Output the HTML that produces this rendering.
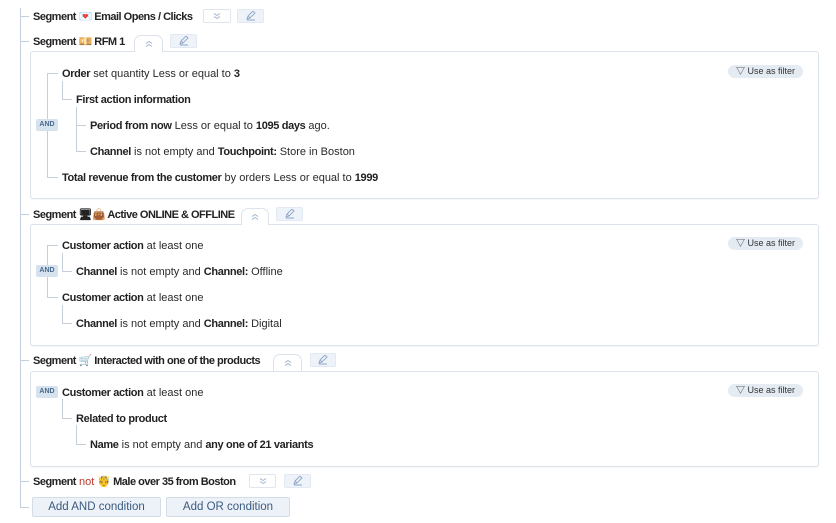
<!DOCTYPE html>
<html><head><meta charset="utf-8"><style>
*{margin:0;padding:0;box-sizing:border-box}
body{width:836px;height:523px;background:#fff;position:relative;overflow:hidden;font-family:"Liberation Sans","Noto Sans CJK JP",sans-serif;font-size:11px;color:#2a2a2a}
.t{position:absolute;line-height:14px;white-space:nowrap;margin-top:-6px}
b{font-weight:bold;color:#222;letter-spacing:-0.35px}
.h b{letter-spacing:-0.5px}
.l{position:absolute;background:#c3d0dc}
.box{position:absolute;left:30px;width:789px;border:1px solid #dde3ea;border-radius:3px;background:#fff;box-shadow:0 1px 1px rgba(0,0,0,.04)}
.btn{position:absolute;height:14px;border:1px solid #dfe6ee;border-radius:2px;background:#fff}
.pen{background:#eef3fa;border-color:#e2e9f2}
.tab{position:absolute;height:17px;border:1px solid #dde3ea;border-bottom:none;border-radius:7px 7px 0 0;background:#fff;z-index:2}
svg{position:absolute;left:50%;top:50%;transform:translate(-50%,-50%)}
.and{position:absolute;left:36px;width:22px;height:12px;margin-top:-6px;background:#d6e2ee;border-radius:2px;color:#4a6a8c;font-size:7px;font-weight:bold;text-align:center;line-height:12px;z-index:2}
.uf{position:absolute;left:728px;width:75px;height:13px;margin-top:-6px;background:#e4ebf3;border-radius:7px;font-size:9px;color:#333;line-height:13px;text-align:center}
.add{position:absolute;top:497px;height:20px;background:#edf2f8;border:1px solid #d3dde8;border-radius:2px;color:#3a5a80;font-size:11.5px;text-align:center;line-height:18px}
</style></head><body>
<svg width="0" height="0" style="position:absolute">
<defs>
<g id="dn"><path d="M1 1l3 2 3-2M1 4l3 2 3-2" fill="none" stroke="#9bb0c8" stroke-width="0.9"/></g>
<g id="up"><path d="M1 3l3-2 3 2M1 6l3-2 3 2" fill="none" stroke="#9bb0c8" stroke-width="0.9"/></g>
<g id="pn"><path d="M1 8l1-3 5-5 2 2-5 5z M2 5l2 2 M1 9h8" fill="none" stroke="#8ea6c4" stroke-width="0.9"/></g>
</defs></svg>

<div class="l" style="left:20px;top:8px;width:1px;height:500px"></div>
<div class="l" style="left:20px;top:16px;width:9px;height:1px"></div>
<div class="l" style="left:20px;top:41px;width:9px;height:1px"></div>
<div class="l" style="left:20px;top:214px;width:9px;height:1px"></div>
<div class="l" style="left:20px;top:360px;width:9px;height:1px"></div>
<div class="l" style="left:20px;top:481px;width:9px;height:1px"></div>
<div class="l" style="left:20px;top:507px;width:9px;height:1px"></div>

<div class="t h" style="left:33px;top:16px"><b>Segment 💌 Email Opens / Clicks</b></div>
<div class="btn" style="left:203px;top:9px;width:28px"><svg width="8" height="7"><use href="#dn"/></svg></div>
<div class="btn pen" style="left:237px;top:9px;width:27px"><svg width="10" height="10"><use href="#pn"/></svg></div>

<div class="t h" style="left:33px;top:41px"><b>Segment 💴 RFM 1</b></div>
<div class="tab" style="left:134px;top:35px;width:29px"><svg width="8" height="7"><use href="#up"/></svg></div>
<div class="btn pen" style="left:170px;top:34px;width:27px"><svg width="10" height="10"><use href="#pn"/></svg></div>
<div class="box" style="top:51px;height:148px"></div>

<div class="l" style="left:47px;top:73px;width:1px;height:105px"></div>
<div class="l" style="left:47px;top:73px;width:11px;height:1px"></div>
<div class="l" style="left:47px;top:177px;width:11px;height:1px"></div>
<div class="l" style="left:62px;top:81px;width:1px;height:18px"></div>
<div class="l" style="left:62px;top:99px;width:10px;height:1px"></div>
<div class="l" style="left:76px;top:107px;width:1px;height:45px"></div>
<div class="l" style="left:76px;top:125px;width:10px;height:1px"></div>
<div class="l" style="left:76px;top:151px;width:10px;height:1px"></div>
<div class="and" style="top:125px">AND</div>
<div class="uf" style="top:71px">▽ Use as filter</div>
<div class="t" style="left:62px;top:73px"><b>Order</b> set quantity Less or equal to <b>3</b></div>
<div class="t" style="left:76px;top:99px"><b>First action information</b></div>
<div class="t" style="left:90px;top:125px"><b>Period from now</b> Less or equal to <b>1095 days</b> ago.</div>
<div class="t" style="left:90px;top:151px"><b>Channel</b> is not empty and <b>Touchpoint:</b> Store in Boston</div>
<div class="t" style="left:62px;top:177px"><b>Total revenue from the customer</b> by orders Less or equal to <b>1999</b></div>

<div class="t h" style="left:33px;top:214px"><b>Segment 🖥👜 Active ONLINE &amp; OFFLINE</b></div>
<div class="tab" style="left:241px;top:208px;width:28px"><svg width="8" height="7"><use href="#up"/></svg></div>
<div class="btn pen" style="left:276px;top:207px;width:27px"><svg width="10" height="10"><use href="#pn"/></svg></div>
<div class="box" style="top:224px;height:122px"></div>
<div class="l" style="left:47px;top:245px;width:1px;height:53px"></div>
<div class="l" style="left:47px;top:245px;width:11px;height:1px"></div>
<div class="l" style="left:47px;top:297px;width:11px;height:1px"></div>
<div class="l" style="left:62px;top:253px;width:1px;height:18px"></div>
<div class="l" style="left:62px;top:271px;width:10px;height:1px"></div>
<div class="l" style="left:62px;top:305px;width:1px;height:18px"></div>
<div class="l" style="left:62px;top:323px;width:10px;height:1px"></div>
<div class="and" style="top:271px">AND</div>
<div class="uf" style="top:243px">▽ Use as filter</div>
<div class="t" style="left:62px;top:245px"><b>Customer action</b> at least one</div>
<div class="t" style="left:76px;top:271px"><b>Channel</b> is not empty and <b>Channel:</b> Offline</div>
<div class="t" style="left:62px;top:297px"><b>Customer action</b> at least one</div>
<div class="t" style="left:76px;top:323px"><b>Channel</b> is not empty and <b>Channel:</b> Digital</div>

<div class="t h" style="left:33px;top:360px"><b>Segment 🛒 Interacted with one of the products</b></div>
<div class="tab" style="left:273px;top:354px;width:29px"><svg width="8" height="7"><use href="#up"/></svg></div>
<div class="btn pen" style="left:310px;top:353px;width:26px"><svg width="10" height="10"><use href="#pn"/></svg></div>
<div class="box" style="top:371px;height:96px"></div>
<div class="and" style="top:392px">AND</div>
<div class="uf" style="top:390px">▽ Use as filter</div>
<div class="l" style="left:62px;top:399px;width:1px;height:19px"></div>
<div class="l" style="left:62px;top:418px;width:10px;height:1px"></div>
<div class="l" style="left:76px;top:425px;width:1px;height:19px"></div>
<div class="l" style="left:76px;top:444px;width:10px;height:1px"></div>
<div class="t" style="left:62px;top:392px"><b>Customer action</b> at least one</div>
<div class="t" style="left:76px;top:418px"><b>Related to product</b></div>
<div class="t" style="left:90px;top:444px"><b>Name</b> is not empty and <b>any one of 21 variants</b></div>

<div class="t h" style="left:33px;top:481px"><b>Segment</b> <span style="color:#c0392b">not</span> <b>🤴 Male over 35 from Boston</b></div>
<div class="btn" style="left:249px;top:474px;width:27px"><svg width="8" height="7"><use href="#dn"/></svg></div>
<div class="btn pen" style="left:284px;top:474px;width:27px"><svg width="10" height="10"><use href="#pn"/></svg></div>

<div class="add" style="left:32px;width:129px">Add AND condition</div>
<div class="add" style="left:166px;width:124px">Add OR condition</div>
</body></html>
